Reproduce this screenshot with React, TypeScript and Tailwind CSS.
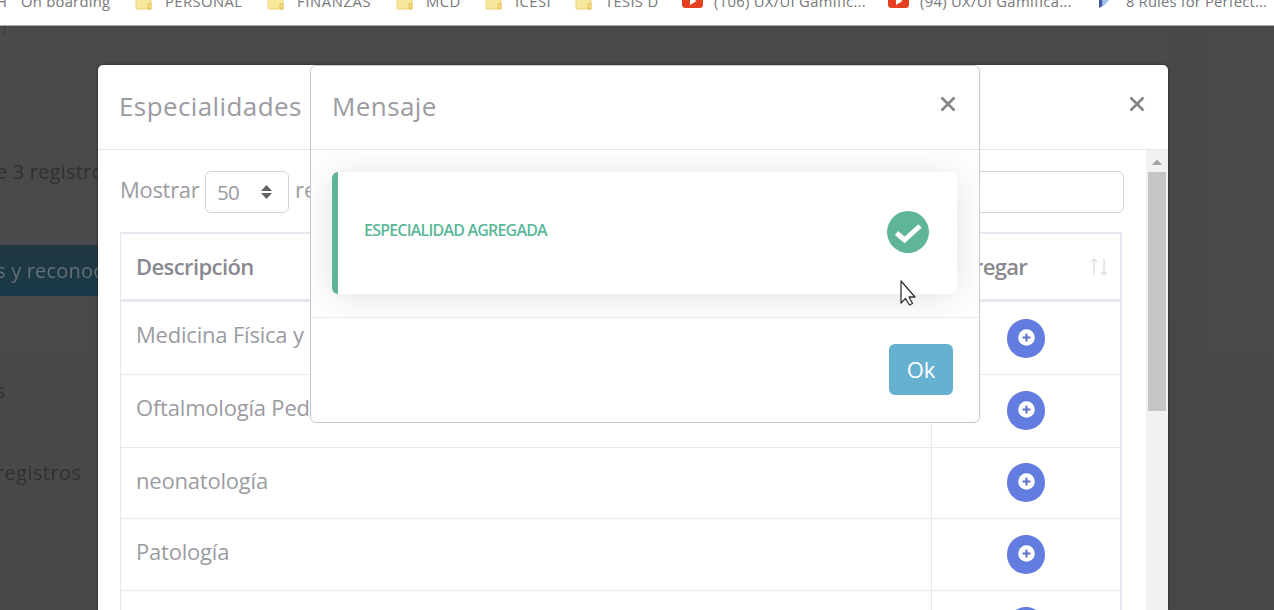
import React from "react";

type Bookmark = { label: string; kind: "text" | "folder" | "video" | "brand"; cell: string; text: string };

const bookmarks: Bookmark[] = [
  { label: "On boarding", kind: "text", cell: "w-[114px]", text: "tracking-[0.25px]" },
  { label: "PERSONAL", kind: "folder", cell: "w-[132px]", text: "tracking-[0.4px]" },
  { label: "FINANZAS", kind: "folder", cell: "w-[129px]", text: "tracking-[0.6px]" },
  { label: "MCD", kind: "folder", cell: "w-[89px]", text: "tracking-[0.4px]" },
  { label: "ICESI", kind: "folder", cell: "w-[90px]", text: "tracking-[0.4px]" },
  { label: "TESIS D", kind: "folder", cell: "w-[107px]", text: "tracking-[0.3px]" },
  { label: "(106) UX/UI Gamific...", kind: "video", cell: "w-[206px]", text: "tracking-[0.3px]" },
  { label: "(94) UX/UI Gamifica...", kind: "video", cell: "w-[210px]", text: "tracking-[0.3px]" },
  { label: "8 Rules for Perfect...", kind: "brand", cell: "w-[178px]", text: "tracking-[0.15px]" },
];

function BookmarkIcon({ kind }: { kind: Bookmark["kind"] }) {
  if (kind === "folder")
    return (
      <svg width="30" height="20" viewBox="0 0 30 20" className="shrink-0">
        <path d="M1 1h15v17H1z" fill="#f8e69a" stroke="#ecd57f" />
        <path d="M13 18v-5.500h3V18z" fill="#f9dc83" stroke="#e3c05c" />
      </svg>
    );
  if (kind === "video")
    return (
      <svg width="32" height="20" viewBox="0 0 32 20" className="shrink-0">
        <rect x="0" y="1" width="21" height="16" rx="3.500" fill="#e5401f" />
        <path d="M8 6l6.500 4L8 14z" fill="#fff" />
      </svg>
    );
  if (kind === "brand")
    return (
      <svg width="28" height="20" viewBox="0 0 28 20" className="shrink-0">
        <path d="M1 3h3.500v12L1 17z" fill="#4257a5" />
        <path d="M5 3h6q1 8-3 9l-2 3H5z" fill="#9cc4ee" />
      </svg>
    );
  return null;
}

function BookmarksBar() {
  return (
    <header className="h-[26px] overflow-hidden border-b border-[#a9a9a9] bg-white">
      <div className="-mt-[9px] flex h-5 items-center whitespace-nowrap text-[14.800px] leading-5 text-[#77787a]">
        <span className="w-[21px] shrink-0 -indent-1">H</span>
        {bookmarks.map((b) => (
          <div key={b.label} className={`flex shrink-0 items-center ${b.cell}`}>
            <BookmarkIcon kind={b.kind} />
            <span className={b.text}>{b.label}</span>
          </div>
        ))}
      </div>
    </header>
  );
}

function PageBehind() {
  return (
    <div className="flex h-[584px] justify-between overflow-hidden bg-linear-to-b from-[#4a4a49] via-[#4a494c] via-10% to-[#484848] text-[20px] whitespace-nowrap text-[#303032]">
      <div className="flex w-[98px] flex-col overflow-hidden leading-[30px]">
        <span className="h-[131px] indent-[2px] text-[9px] leading-[8px]">|</span>
        <span className="-ml-1 h-[88px] tracking-[0.2px] blur-[0.7px]">e 3 registros</span>
        <div className="h-[51px] shrink-0 bg-linear-to-b from-[#20373f] to-[#19394a] pt-[11px] text-[#647076]">
          <span className="-ml-1 block tracking-[0.2px] blur-[0.7px]">s y reconoc</span>
        </div>
        <span className="-ml-1 h-[81px] pt-[80px] blur-[0.7px]">s</span>
        <span className="-ml-1 mt-[81px] shrink-0 tracking-[0.4px] blur-[0.7px]">registros</span>
      </div>
      <div className="mr-[66px] w-10 bg-[#454546]/40" />
    </div>
  );
}

function CloseIcon() {
  return (
    <svg width="16" height="16" viewBox="0 0 16 16" fill="none" stroke="#858588" strokeWidth="2.700">
      <path d="M1.500 1.500l13 13M14.500 1.500l-13 13" />
    </svg>
  );
}

function AddButton() {
  return (
    <button className="flex h-[39px] w-[38px] items-center justify-center rounded-full bg-[#627cdf] pb-[3px]">
      <svg width="17" height="17" viewBox="0 0 17 17">
        <circle cx="8.500" cy="8.500" r="8.300" fill="#fff" />
        <path d="M8.500 4.500v8M4.500 8.500h8" stroke="#5b6fc8" strokeWidth="2" />
      </svg>
    </button>
  );
}

const specialties = [
  { name: "Medicina Física y Rehabilitación", height: "h-[73px]", action: "pt-[17px]" },
  { name: "Oftalmología Pediátrica", height: "h-[73px]", action: "pt-4" },
  { name: "neonatología", height: "h-[71px]", action: "pt-[15px]" },
  { name: "Patología", height: "h-[72px]", action: "pt-4" },
  { name: "", height: "h-[72px]", action: "pt-4" },
];

function SpecialtiesModal() {
  return (
    <section className="absolute top-[65px] left-[98px] flex h-[545px] w-[1070px] flex-col overflow-hidden rounded-t-[5px] bg-white shadow-[0_0_3px_#222]">
      <div className="flex h-[85px] shrink-0 items-start justify-between border-b border-[#e6e6ea] pt-[22px] pr-[23px] pl-[21px]">
        <h2 className="text-[26px] leading-[38px] tracking-[0.4px]">Especialidades</h2>
        <button className="mt-[9px]" aria-label="Cerrar"><CloseIcon /></button>
      </div>
      <div className="flex min-h-0 flex-1">
        <div className="flex-1 overflow-hidden pt-[21px] pl-[22px]">
          <div className="flex h-[42px] w-[1004px] items-center">
            <span className="w-[85px] pb-[6px] tracking-[-0.3px]">Mostrar</span>
            <div className="flex h-[42px] w-[84px] items-center justify-between rounded-md border border-[#d2d3db] pr-[15px] pl-[11px] text-[20.500px] tracking-[-0.8px]">
              50
              <svg width="13" height="16" viewBox="0 0 13 16" fill="#616166">
                <path d="M6.500 1l5.500 6H1zM6.500 15l5.500-6H1z" />
              </svg>
            </div>
            <span className="ml-[6px] flex-1 pb-[6px]">registros</span>
            <div className="h-[42px] w-[240px] rounded-md border border-[#d2d3db]" />
          </div>
          <div className="mt-[19px] w-[1002px] border-t-2 border-r-2 border-l border-[#e6e7ee]">
            <div className="flex h-[68px] border-b-[3px] border-[#e6e7ee] font-semibold text-[#88888f]">
              <div className="w-[810px] pt-[16px] pl-[15px] tracking-[-0.6px]">Descripción</div>
              <div className="flex flex-1 justify-between border-l border-[#e6e7ee] pt-[16px] pr-[11px] pl-[15px]">
                <span className="w-[80px] text-right tracking-[-0.7px]">Agregar</span>
                <svg width="20" height="20" viewBox="0 0 20 20" fill="none" stroke="#dedee3" strokeWidth="1.300" className="mt-[7px]">
                  <path d="M5 18V2M2 5l3-3 3 3M15 2v16M12 15l3 3 3-3" />
                </svg>
              </div>
            </div>
            {specialties.map((s, i) => (
              <div key={i} className={`flex border-b border-[#e9eaf0] ${s.height}`}>
                <div className="w-[810px] pt-[16px] pl-[15px] tracking-[-0.2px]">{s.name}</div>
                <div className={`flex flex-1 justify-center border-l border-[#e6e7ee] ${s.action}`}><AddButton /></div>
              </div>
            ))}
          </div>
        </div>
        <div className="flex w-[22px] shrink-0 flex-col items-center bg-[#f1f1f3]">
          <svg width="10" height="22" viewBox="0 0 10 22"><path d="M0 15l5-5.500 5 5.500z" fill="#a2a2a5" /></svg>
          <div className="h-[239px] w-[18px] bg-[#c5c5c7]" />
        </div>
      </div>
    </section>
  );
}

function MessageModal() {
  return (
    <section className="absolute top-[65px] left-[310px] flex h-[358px] w-[670px] flex-col rounded-[6px] border border-[#c8c8cc] bg-white">
      <div className="flex h-[84px] shrink-0 items-start justify-between border-b border-[#e3e3e7] pt-[21px] pr-[23px] pl-[21px]">
        <h2 className="text-[26px] leading-[38px] tracking-[0.4px]">Mensaje</h2>
        <button className="mt-[9px]" aria-label="Cerrar"><CloseIcon /></button>
      </div>
      <div className="h-[168px] shrink-0 overflow-hidden border-b border-[#ececef] pt-[22px] pr-[22px] pl-[21px]">
        <div className="flex h-[122px] items-center justify-between rounded-[6px] border-l-[6px] border-[#5eb597] bg-white pr-[28px] pb-[2px] pl-[26px] shadow-[0_3px_38px_rgba(58,59,69,0.15)]">
          <span className="pb-[4px] text-[16px] font-semibold tracking-[-0.8px] text-[#58b899]">ESPECIALIDAD AGREGADA</span>
          <svg width="42" height="42" viewBox="0 0 42 42">
            <circle cx="21" cy="21" r="21" fill="#5eb598" />
            <path d="M9.500 22l8 7L33 15" fill="none" stroke="#fff" strokeWidth="5" />
          </svg>
        </div>
      </div>
      <div className="flex justify-end pt-[26px] pr-[26px]">
        <button className="h-[51px] w-[64px] rounded-[6px] bg-[#66b1d0] pb-[2px] text-[22px] text-white">Ok</button>
      </div>
    </section>
  );
}

export default function App() {
  return (
    <main className="relative h-[610px] w-[1274px] overflow-hidden bg-[#494949] font-['Open_Sans',sans-serif] text-[22px] leading-[32px] text-[#9b9ba2]">
      <BookmarksBar />
      <PageBehind />
      <SpecialtiesModal />
      <MessageModal />
      <svg width="18" height="28" viewBox="0 0 18 28" className="absolute top-[279px] left-[899px]">
        <path d="M2 2v22l4.500-4.500 4 6.500 3-1.500-3.500-6.500h6z" fill="#fff" stroke="#333" strokeWidth="1.300" strokeLinejoin="round" />
      </svg>
    </main>
  );
}
